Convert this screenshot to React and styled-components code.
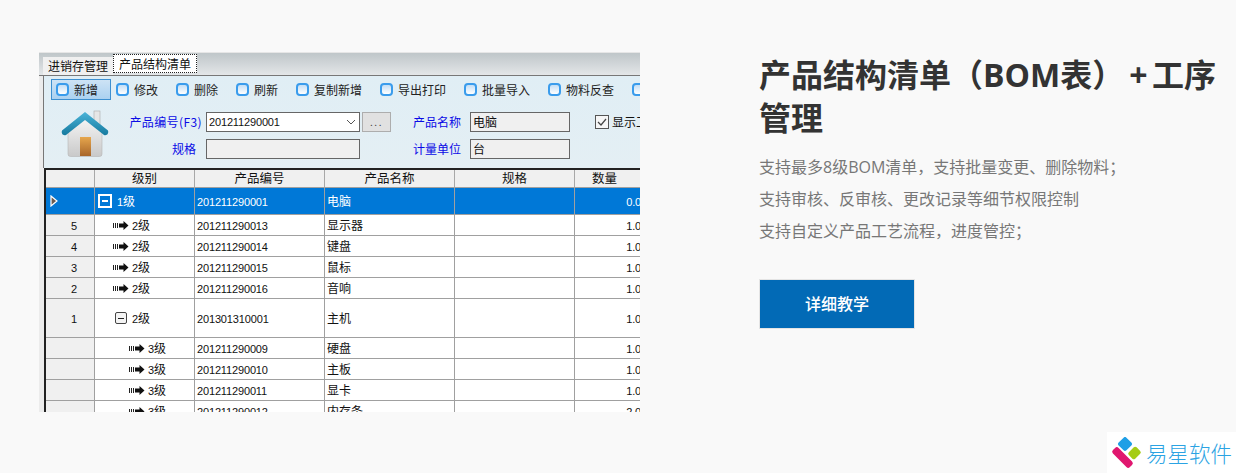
import React from 'react';
import styled, { createGlobalStyle } from 'styled-components';

const CJK = `"Noto Sans CJK SC", "Noto Sans", sans-serif`;

const GlobalStyle = createGlobalStyle`
    * { box-sizing: border-box; }
    html, body { margin: 0; padding: 0; background: #f9f9f9; }
    body { font-family: ${CJK}; }
`

const Page = styled.div`
    position: relative;
    display: flex;
    align-items: flex-start;
    width: 1236px;
    height: 473px;
    padding: 52px 0 0 39px;
    overflow: hidden;
    background: #f9f9f9;
`

const Shot = styled.div`
    flex: none;
    width: 601px;
    height: 360px;
    overflow: hidden;
    background: #ececec;
    color: #111;
    font-size: 12px;
    line-height: 1;
`

const TabStrip = styled.div`
    display: flex;
    align-items: flex-end;
    height: 24px;
    padding: 3px 0 0 4px;
    background: linear-gradient(#bfc6c9, #e3e6e8);
    border-top: 1px solid #e6e6e6;
    border-bottom: 1px solid #777;
`

const Tab = styled.div`
    display: flex;
    align-items: center;
    justify-content: center;
    width: ${p => p.$w}px;
    height: ${p => p.$active ? 19 : 18}px;
    margin-bottom: ${p => p.$active ? 2 : 0}px;
    background: ${p => p.$active ? '#fff' : '#f0f0f0'};
    border: ${p => p.$active ? '1px dotted #222' : 'none'};
    font-size: 12px;
`

const Panel = styled.div`
    margin-left: 4px;
    height: 92px;
    background: linear-gradient(#e0eef5, #e4eff4);
    border-left: 1px solid #777;
`

const Toolbar = styled.div`
    display: flex;
    padding: 3px 0 0 7px;
    white-space: nowrap;
`

const ToolButton = styled.div`
    flex: none;
    display: flex;
    align-items: center;
    gap: 5px;
    width: ${p => p.$w}px;
    height: 21px;
    padding-left: 5px;
    background: ${p => p.$active ? 'linear-gradient(#cfe4f5, #a9d0f0)' : 'transparent'};
    outline: ${p => p.$active ? '1px solid #3d8fd0' : 'none'};
    outline-offset: -1px;
    color: #222;
`

const ToolIcon = styled.span`
    flex: none;
    width: 13px;
    height: 13px;
    border: 2px solid #3a9cec;
    border-radius: 4px;
    background: linear-gradient(#c4def5, #fff);
`

const FormRow = styled.div`
    display: flex;
    align-items: flex-start;
    padding: 10px 0 0 17px;
`

const HouseIcon = styled.svg`
    flex: none;
    width: 48px;
    height: 48px;
`

const FormGrid = styled.div`
    display: grid;
    grid-template-columns: 73px 158px 31px 70px 109px 60px;
    grid-template-rows: 20px 20px;
    row-gap: 7px;
    margin: 2px 0 0 20px;
    align-items: center;
`

const FieldLabel = styled.label`
    justify-self: end;
    margin-right: ${p => p.$inset || 0}px;
    color: #0a0ae6;
    white-space: nowrap;
    letter-spacing: ${p => p.$wide ? 0.4 : 0}px;
`

const Field = styled.div`
    justify-self: end;
    display: flex;
    align-items: center;
    justify-content: space-between;
    width: ${p => p.$w}px;
    height: 20px;
    padding: 0 2px;
    border: 1px solid #666;
    background: ${p => p.$white ? '#fff' : '#f0f0f0'};
`

const Digits = styled.span`
    font-family: "Liberation Sans", sans-serif;
    font-size: 11px;
    letter-spacing: -0.15px;
`

const MoreButton = styled.div`
    justify-self: end;
    width: 29px;
    height: 20px;
    border: 1px solid #adadad;
    background: #e1e1e1;
    color: #444;
    font-size: 10px;
    letter-spacing: 1.5px;
    text-align: center;
    line-height: 17px;
`

const CheckField = styled.div`
    display: flex;
    align-items: center;
    gap: 3px;
    padding-left: 25px;
    white-space: nowrap;
`

const CheckBox = styled.svg`
    flex: none;
    width: 14px;
    height: 14px;
`

const TableWrap = styled.div`
    margin-left: 5px;
    border-top: 2px solid #222;
    border-left: 2px solid #222;
    background: #fff;
`

const Table = styled.table`
    width: 609px;
    table-layout: fixed;
    border-collapse: separate;
    border-spacing: 0;
    font-weight: 400;
`

const HeadCell = styled.th`
    height: 18px;
    padding: ${p => p.$last ? '0 20px 0 0' : 0};
    background: #f0f0f0;
    border-right: 1px solid #a8a8a8;
    border-bottom: 1px solid #a0a0a0;
    font-weight: 400;
    font-size: 12.5px;
    text-align: center;
`

const Row = styled.tr`
    background: ${p => p.$selected ? '#0078d7' : '#fff'};
    color: ${p => p.$selected ? '#fff' : '#111'};
`

const Cell = styled.td`
    height: ${p => p.$h}px;
    padding: ${p => p.$right ? '0 7px 0 2px' : '0 4px 0 2px'};
    border-right: 1px solid #a0a0a0;
    border-bottom: 1px solid #a0a0a0;
    text-align: ${p => p.$right ? 'right' : 'left'};
    white-space: nowrap;
    overflow: hidden;
`

const RowHead = styled(Cell)`
    padding: 0 0 0 8px;
    background: ${p => p.$selected ? '#0078d7' : '#f0f0f0'};
    text-align: center;
`

const LevelCell = styled.div`
    display: flex;
    align-items: center;
    gap: ${p => p.$gap}px;
    padding-left: ${p => p.$indent}px;
`

const Pointer = styled.svg`
    display: block;
    margin-left: -4px;
    width: 8px;
    height: 12px;
`

const MinusBox = styled.span`
    position: relative;
    flex: none;
    width: ${p => p.$big ? 14 : 12}px;
    height: ${p => p.$big ? 14 : 12}px;
    border: ${p => p.$big ? '2px solid #fff' : '1px solid #444'};
    border-radius: ${p => p.$big ? 0 : 2}px;
    background: ${p => p.$big ? 'transparent' : '#f4f4f4'};

    &::after {
        content: "";
        position: absolute;
        left: 2px;
        right: 2px;
        top: 50%;
        height: ${p => p.$big ? 2 : 1}px;
        margin-top: ${p => p.$big ? -1 : -0.5}px;
        background: ${p => p.$big ? '#fff' : '#222'};
    }
`

const ArrowIcon = styled.svg`
    flex: none;
    width: 16px;
    height: 9px;
`

const Info = styled.section`
    flex: none;
    width: 472px;
    margin: 1px 0 0 119px;
    font-family: "Open Sans", ${CJK};
`

const Title = styled.h2`
    margin: 0 0 12px;
    color: #333;
    font-size: 32px;
    font-weight: 700;
    line-height: 43px;
`

const Plus = styled.span`
    margin: 0 4.500px 0 5px;
`

const Feature = styled.p`
    margin: 0;
    color: #777;
    font-size: 16px;
    line-height: 32px;
    white-space: nowrap;
`

const DetailButton = styled.a`
    display: flex;
    align-items: center;
    justify-content: center;
    width: 156px;
    height: 50px;
    margin-top: 32px;
    padding-bottom: 3px;
    background: #026ab6;
    border: 1px solid #e4e4e4;
    color: #fff;
    font-size: 16px;
    font-weight: 500;
`

const LogoBadge = styled.div`
    position: absolute;
    right: 0;
    bottom: 0;
    display: flex;
    align-items: center;
    gap: 4px;
    width: 129px;
    height: 41px;
    padding-left: 3px;
    background: #fff;
`

const LogoMark = styled.svg`
    flex: none;
    width: 32px;
    height: 32px;
`

const LogoText = styled.span`
    color: #2ba3e3;
    font-size: 21.500px;
    font-weight: 300;
    white-space: nowrap;
`

const tools = [
    { name: '新增', w: 60, active: true },
    { name: '修改', w: 60 },
    { name: '删除', w: 60 },
    { name: '刷新', w: 60 },
    { name: '复制新增', w: 84 },
    { name: '导出打印', w: 84 },
    { name: '批量导入', w: 84 },
    { name: '物料反查', w: 84 },
    { name: '', w: 20 },
]

const rows = [
    { head: '', level: 1, code: '201211290001', name: '电脑', qty: '0.00', h: 27, selected: true },
    { head: '5', level: 2, code: '201211290013', name: '显示器', qty: '1.00', h: 21 },
    { head: '4', level: 2, code: '201211290014', name: '键盘', qty: '1.00', h: 21 },
    { head: '3', level: 2, code: '201211290015', name: '鼠标', qty: '1.00', h: 21 },
    { head: '2', level: 2, code: '201211290016', name: '音响', qty: '1.00', h: 21 },
    { head: '1', level: 2, open: true, code: '201301310001', name: '主机', qty: '1.00', h: 39 },
    { head: '', level: 3, code: '201211290009', name: '硬盘', qty: '1.00', h: 21 },
    { head: '', level: 3, code: '201211290010', name: '主板', qty: '1.00', h: 21 },
    { head: '', level: 3, code: '201211290011', name: '显卡', qty: '1.00', h: 21 },
    { head: '', level: 3, code: '201211290012', name: '内存条', qty: '2.00', h: 21 },
]

const Arrow = () => (
    <ArrowIcon viewBox="0 0 16 9">
        <path d="M0.5 2v5M2.5 2v5M4.5 2v5" stroke="#222" strokeWidth="1" fill="none" />
        <path d="M6 2.5h4.5V0L15.5 4.5 10.500 9V6.500H6z" fill="#111" />
    </ArrowIcon>
)

const House = () => (
    <HouseIcon viewBox="0 0 48 48">
        <defs>
            <linearGradient id="wall" x1="0" y1="0" x2="0" y2="1">
                <stop offset="0" stopColor="#f6f6f6" />
                <stop offset="1" stopColor="#c9c9c9" />
            </linearGradient>
            <linearGradient id="roof" x1="0" y1="0" x2="0" y2="1">
                <stop offset="0" stopColor="#4bb4d8" />
                <stop offset="1" stopColor="#157a9f" />
            </linearGradient>
            <linearGradient id="door" x1="0" y1="0" x2="0" y2="1">
                <stop offset="0" stopColor="#e6a64d" />
                <stop offset="1" stopColor="#a8662a" />
            </linearGradient>
        </defs>
        <rect x="33" y="1" width="6" height="14" fill="#e6e6e6" stroke="#aaa" strokeWidth="0.6" />
        <path d="M7 22L24 7l17 15v22a2.500 2.500 0 0 1-2.500 2.500h-29A2.500 2.500 0 0 1 7 44z" fill="url(#wall)" stroke="#b5b5b5" strokeWidth="0.6" />
        <rect x="19" y="27" width="11" height="19" fill="url(#door)" />
        <path d="M1 20.500L24 2l23 18.500c1 3-1 5.500-4 4.500L24 10 5 25c-3 1-5-1.500-4-4.500z" fill="url(#roof)" />
    </HouseIcon>
)

const LevelContent = ({ row }) => {
    if (row.level === 1) {
        return (
            <LevelCell $indent={1} $gap={5}>
                <MinusBox $big />
                <span><Digits>1</Digits>级</span>
            </LevelCell>
        )
    }
    if (row.open) {
        return (
            <LevelCell $indent={18} $gap={5}>
                <MinusBox />
                <span><Digits>2</Digits>级</span>
            </LevelCell>
        )
    }
    return (
        <LevelCell $indent={row.level === 2 ? 16 : 32} $gap={3}>
            <Arrow />
            <span><Digits>{row.level}</Digits>级</span>
        </LevelCell>
    )
}

const App = () => {
    return (
        <Page>
            <GlobalStyle />
            <Shot>
                <TabStrip>
                    <Tab $w={70}>进销存管理</Tab>
                    <Tab $w={84} $active>产品结构清单</Tab>
                </TabStrip>
                <Panel>
                    <Toolbar>
                        {tools.map((t, i) => (
                            <ToolButton key={i} $w={t.w} $active={t.active}>
                                <ToolIcon />
                                {t.name}
                            </ToolButton>
                        ))}
                    </Toolbar>
                    <FormRow>
                        <House />
                        <FormGrid>
                            <FieldLabel $wide>产品编号(F3)</FieldLabel>
                            <Field $w={154} $white>
                                <Digits>201211290001</Digits>
                                <svg width="12" height="12" viewBox="0 0 12 12">
                                    <path d="M2 4l4 4 4-4" stroke="#555" strokeWidth="1" fill="none" />
                                </svg>
                            </Field>
                            <MoreButton>...</MoreButton>
                            <FieldLabel>产品名称</FieldLabel>
                            <Field $w={100}>电脑</Field>
                            <CheckField>
                                <CheckBox viewBox="0 0 14 14">
                                    <rect x="0.500" y="0.500" width="13" height="13" fill="#f6f6f6" stroke="#555" />
                                    <path d="M3 7l3 3 5-6" stroke="#444" strokeWidth="1.200" fill="none" />
                                </CheckBox>
                                显示工序
                            </CheckField>
                            <FieldLabel $inset={6}>规格</FieldLabel>
                            <Field $w={154} />
                            <span />
                            <FieldLabel>计量单位</FieldLabel>
                            <Field $w={100}>台</Field>
                        </FormGrid>
                    </FormRow>
                </Panel>
                <TableWrap>
                    <Table>
                        <colgroup>
                            <col width="49" />
                            <col width="100" />
                            <col width="130" />
                            <col width="130" />
                            <col width="120" />
                            <col width="80" />
                        </colgroup>
                        <thead>
                            <tr>
                                <HeadCell />
                                <HeadCell>级别</HeadCell>
                                <HeadCell>产品编号</HeadCell>
                                <HeadCell>产品名称</HeadCell>
                                <HeadCell>规格</HeadCell>
                                <HeadCell $last>数量</HeadCell>
                            </tr>
                        </thead>
                        <tbody>
                            {rows.map(r => (
                                <Row key={r.code} $selected={r.selected}>
                                    <RowHead $h={r.h} $selected={r.selected}>
                                        {r.selected ? (
                                            <Pointer viewBox="0 0 8 12">
                                                <path d="M1 1l6 5-6 5z" fill="#6b5b50" stroke="#fff" strokeWidth="1.200" />
                                            </Pointer>
                                        ) : <Digits>{r.head}</Digits>}
                                    </RowHead>
                                    <Cell $h={r.h}><LevelContent row={r} /></Cell>
                                    <Cell $h={r.h}><Digits>{r.code}</Digits></Cell>
                                    <Cell $h={r.h}>{r.name}</Cell>
                                    <Cell $h={r.h} />
                                    <Cell $h={r.h} $right><Digits>{r.qty}</Digits></Cell>
                                </Row>
                            ))}
                        </tbody>
                    </Table>
                </TableWrap>
            </Shot>
            <Info>
                <Title>产品结构清单（BOM表）<Plus>+</Plus>工序管理</Title>
                <Feature>支持最多8级BOM清单，支持批量变更、删除物料；</Feature>
                <Feature>支持审核、反审核、更改记录等细节权限控制</Feature>
                <Feature>支持自定义产品工艺流程，进度管控；</Feature>
                <DetailButton>详细教学</DetailButton>
            </Info>
            <LogoBadge>
                <LogoMark viewBox="0 0 32 32">
                    <rect x="9.500" y="1.500" width="11" height="11" rx="2" transform="rotate(45 15 7)" fill="#1f9fe6" />
                    <rect x="19" y="11.500" width="11" height="9" rx="2" transform="rotate(-45 24.500 16)" fill="#a5cc14" />
                    <rect x="0.500" y="16.500" width="24" height="8" rx="2.500" transform="rotate(45 12.500 20.500)" fill="#e0176f" />
                </LogoMark>
                <LogoText>易星软件</LogoText>
            </LogoBadge>
        </Page>
    )
}

export default App;
